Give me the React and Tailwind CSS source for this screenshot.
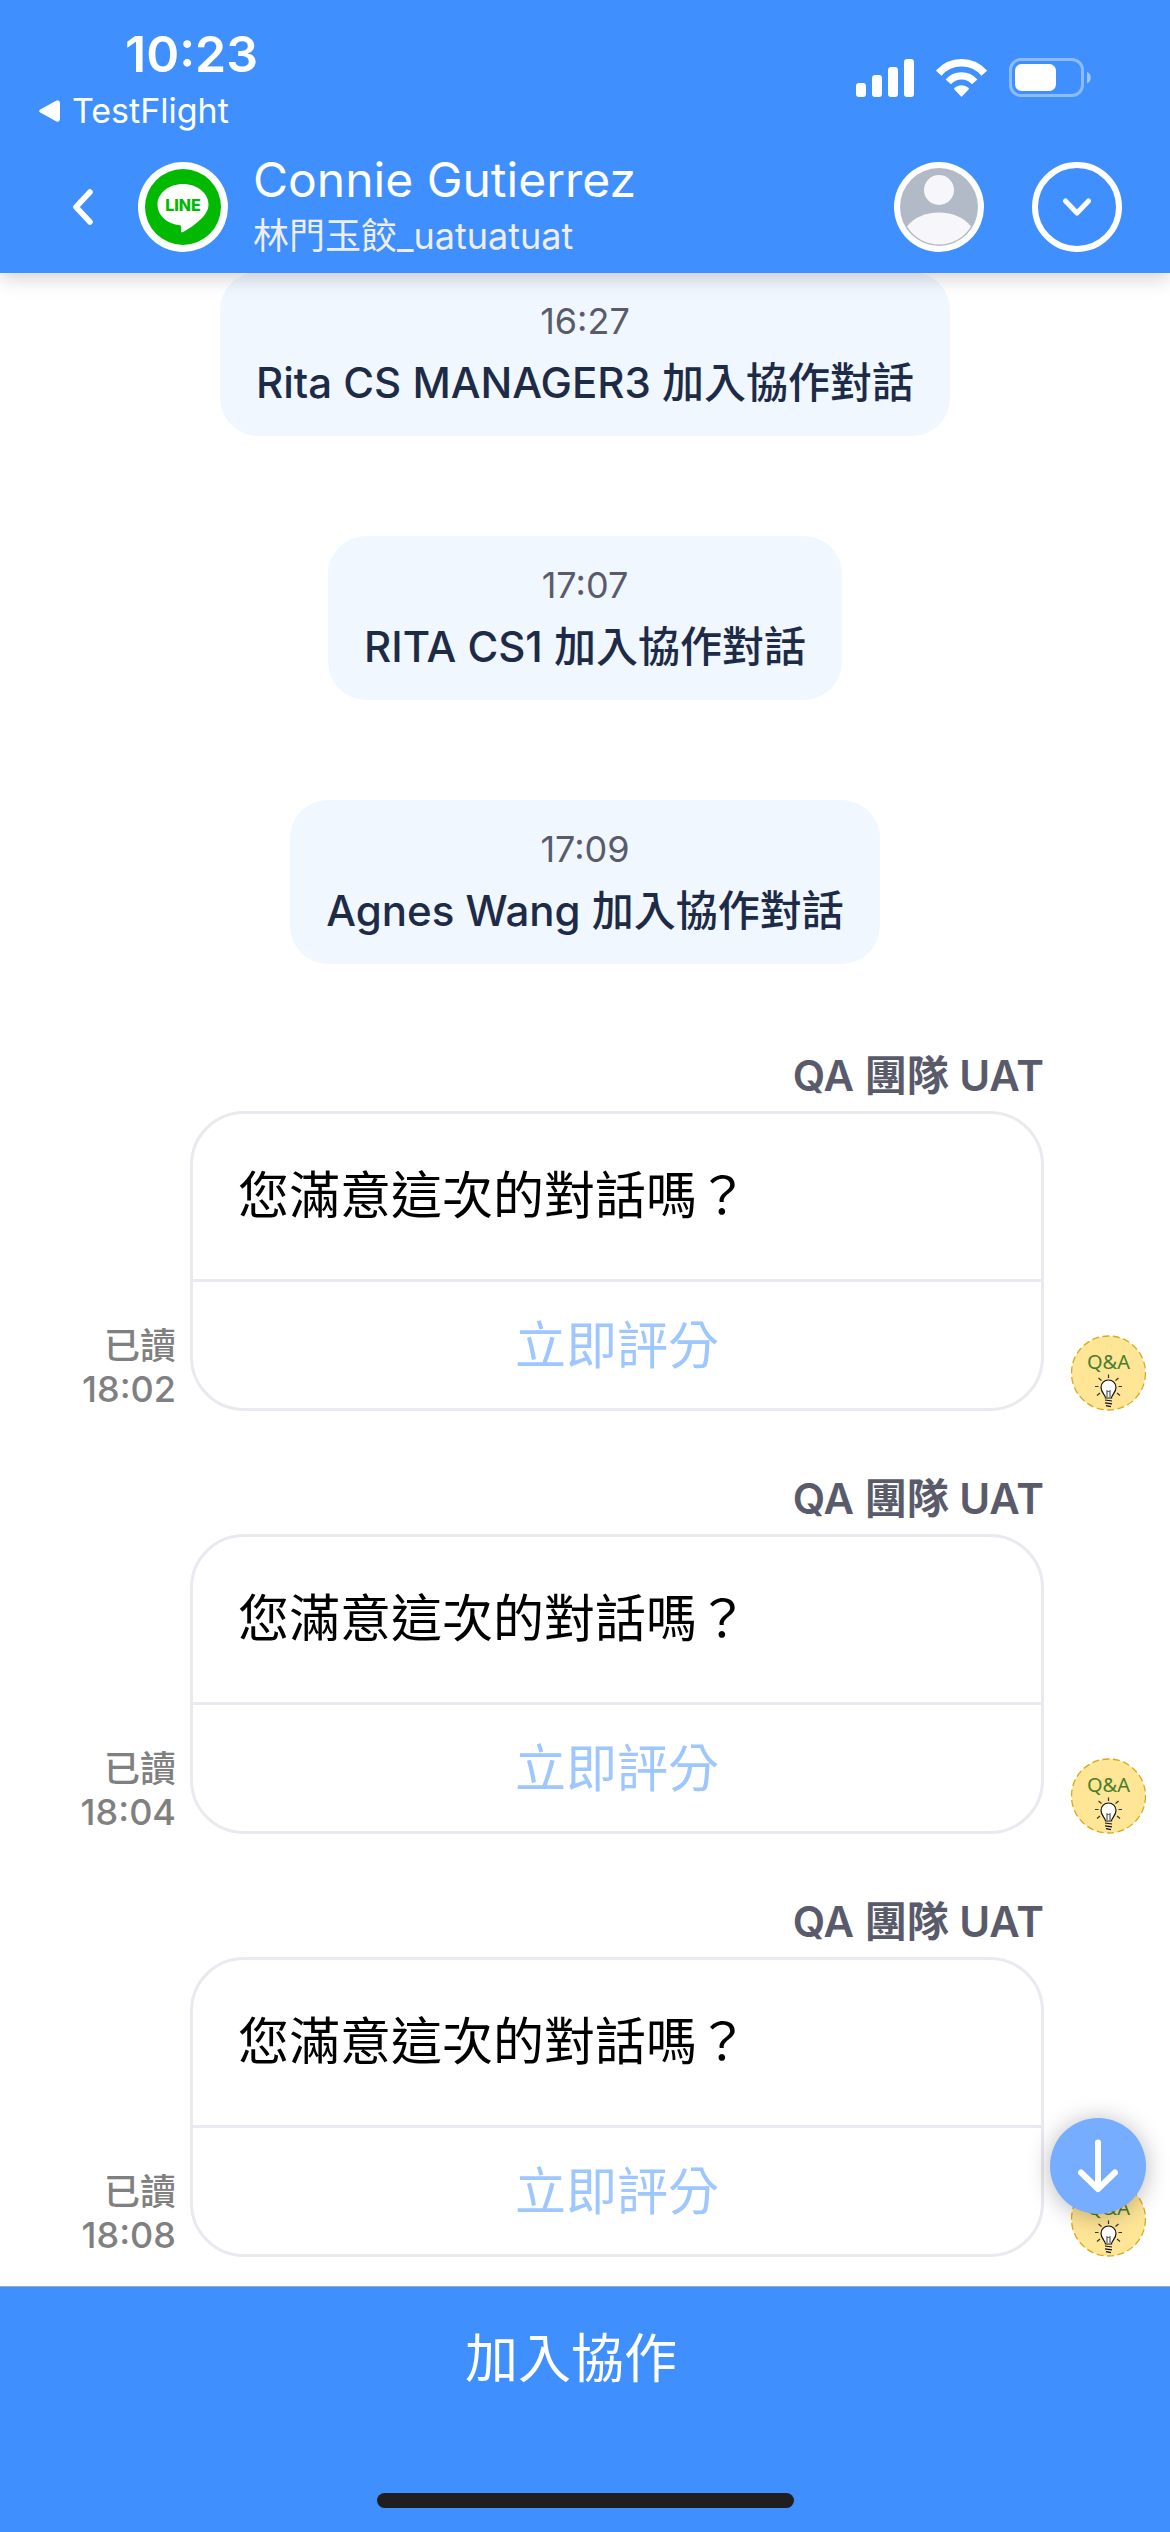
const joins = [
  { time: "16:27", name: "Rita CS MANAGER3" },
  { time: "17:07", name: "RITA CS1" },
  { time: "17:09", name: "Agnes Wang" },
];

const surveys = ["18:02", "18:04", "18:08"];

function SignalIcon() {
  return (
    <svg width="58" height="38" viewBox="0 0 58 38" fill="#fff" aria-hidden="true">
      <rect x="0" y="24" width="10" height="14" rx="3" />
      <rect x="16" y="16" width="10" height="22" rx="3" />
      <rect x="32" y="8" width="10" height="30" rx="3" />
      <rect x="48" y="0" width="10" height="38" rx="3" />
    </svg>
  );
}

function WifiIcon() {
  return (
    <svg width="51" height="38" viewBox="0 0 51 38" fill="none" aria-hidden="true">
      <path d="M2.7 14.2A30.25 30.25 0 0 1 48.3 14.2" stroke="#fff" strokeWidth="7.5" />
      <path d="M12.3 22.8A17.5 17.5 0 0 1 38.7 22.8" stroke="#fff" strokeWidth="7.2" />
      <path d="M18.2 30.2C18 29.7 18.1 29.2 18.6 28.8C22.4 25.4 28.6 25.4 32.4 28.8C32.9 29.2 33 29.7 32.8 30.2L26.2 37.3Q25.5 38 24.8 37.3Z" fill="#fff" />
    </svg>
  );
}

function BatteryIcon() {
  return (
    <svg width="83" height="39" viewBox="0 0 83 39" fill="none" aria-hidden="true">
      <rect x="1.5" y="1.5" width="72" height="36" rx="10.5" stroke="#fff" strokeOpacity=".4" strokeWidth="3" />
      <path d="M78 14C83 15 83 24 78 25.5Z" fill="#fff" fillOpacity=".5" />
      <rect x="6" y="6" width="41" height="27" rx="6.5" fill="#fff" />
    </svg>
  );
}

function LineLogo() {
  return (
    <svg width="90" height="90" viewBox="0 0 90 90" role="img" aria-label="LINE" className="shrink-0">
      <circle cx="45" cy="45" r="45" fill="#fff" />
      <circle cx="45" cy="45" r="38" fill="#00b900" />
      <path d="M45 22C59 22 70.500 31 70.500 42.500C70.500 48 67.500 52.500 63.500 56.500C58 62 50 67.500 45 70C42.800 71 43 69.500 43.200 68.200C43.500 65.500 43.600 63.300 41 63C28.500 61.800 19.500 53 19.500 42.500C19.500 31 31 22 45 22Z" fill="#fff" />
      <text x="45" y="49" textAnchor="middle" fill="#00b900" fontSize="16" fontWeight="800" fontFamily="Inter, sans-serif">LINE</text>
    </svg>
  );
}

function PersonAvatar() {
  return (
    <svg width="90" height="90" viewBox="0 0 90 90" aria-hidden="true">
      <circle cx="45" cy="45" r="45" fill="#fff" />
      <circle cx="45" cy="45" r="39" fill="#b3bac7" />
      <circle cx="45" cy="28" r="15" fill="#f7f7fb" />
      <path d="M13 64.500C20 55.500 31.500 50.500 45 50.500C58.500 50.500 70 55.500 77 64.500A37.500 37.500 0 0 1 13 64.500Z" fill="#f7f7fb" />
    </svg>
  );
}

function QaBadge() {
  return (
    <svg width="75" height="76" viewBox="0 0 75 76" role="img" aria-label="Q&A" className="shrink-0">
      <circle cx="37.500" cy="38" r="37" fill="#ffe596" stroke="#d9a91c" strokeWidth="1.300" strokeDasharray="7 3.500" />
      <text x="37.500" y="34" textAnchor="middle" fill="#4a7d2c" fontSize="20" fontFamily="'Noto Sans', sans-serif">Q&amp;A</text>
      <g stroke="#333" strokeWidth="1.200" fill="none">
        <path d="M37.500 39.500v3.500M27.500 43l3 2.500M47.500 43l-3 2.500M24 51.500h3.500M47.500 51.500h3.500M26 60.500l3-2.500M49 60.500l-3-2.500" />
        <path d="M34.500 63C34.500 60 30 57.500 30 52.500A7.500 7.500 0 0 1 45 52.500C45 57.500 40.500 60 40.500 63Z" fill="#fff" stroke="#111" />
        <path d="M36 62v-6.500l1.500 1.500l1.500-1.500V62" stroke="#333" strokeWidth="1" />
        <path d="M34 65l7 1M34 67.800l7 1M35 70.600l5 1" stroke="#111" strokeWidth="1.200" />
      </g>
    </svg>
  );
}

function JoinNotice({ time, name }) {
  return (
    <div className="rounded-[38px] bg-[#f0f7ff] px-9 pt-[25px] pb-[25px] text-center">
      <time className="block text-[36px] leading-[48px] text-[#595b6b]">{time}</time>
      <p className="mt-[10px] text-[42px] leading-[56px] font-medium text-[#1d2b47]">{name} 加入協作對話</p>
    </div>
  );
}

function SurveyMessage({ time }) {
  return (
    <article className="mb-[60px] last:mb-0">
      <h2 className="mr-[126px] mb-[7px] text-right text-[42px] leading-[56px] font-semibold text-[#595b6b]">QA 團隊 UAT</h2>
      <div className="flex items-end pr-6">
        <div className="mr-3.5 w-44 shrink-0 text-right text-[36px] leading-[43px] font-medium text-[#808080]">
          <p>已讀</p>
          <time className="block">{time}</time>
        </div>
        <div className="mr-[27px] min-w-0 flex-1 overflow-hidden rounded-[54px] border-[3px] border-[#e9e9f0]">
          <p className="px-[45px] pt-[50px] pb-[51px] text-[51px] leading-[64px] text-black">您滿意這次的對話嗎？</p>
          <button type="button" className="block w-full border-t-[3px] border-[#e9e9f0] pt-8 pb-[30px] text-[51px] leading-[64px] text-[#9ec6ff]">
            立即評分
          </button>
        </div>
        <QaBadge />
      </div>
    </article>
  );
}

export default function App() {
  return (
    <div className="flex min-h-screen flex-col bg-white font-['Inter','Noto_Sans_CJK_TC',sans-serif]">
      <header className="relative z-10 bg-[#3f8fff] pb-[3px] text-white shadow-[0_4px_20px_rgba(0,0,0,0.2)]">
        <div className="flex items-start justify-between pt-8 pr-[78px]">
          <div>
            <time className="block pl-[125px] text-[50px] leading-[44px] font-semibold">10:23</time>
            <a href="#testflight" className="mt-[15px] ml-[39px] flex items-center gap-3 text-[34px] leading-10">
              <svg width="21" height="22" viewBox="0 0 21 22" fill="#fff" aria-hidden="true">
                <path d="M1.200 9.400L17.500 .6Q20.500-.4 21 3V19Q20.500 22.400 17.500 21.400L1.200 12.600Q-.8 11 1.200 9.400Z" />
              </svg>
              TestFlight
            </a>
          </div>
          <div className="mt-[26px] flex items-center gap-[22px]">
            <SignalIcon />
            <WifiIcon />
            <BatteryIcon />
          </div>
        </div>
        <div className="mt-[13px] flex h-[126px] items-center pr-12">
          <button type="button" aria-label="返回" className="ml-[73px] shrink-0">
            <svg width="20" height="36" viewBox="0 0 20 36" fill="none" stroke="#fff" strokeWidth="5.500" strokeLinecap="round" strokeLinejoin="round" aria-hidden="true">
              <path d="M17 3L3 18L17 33" />
            </svg>
          </button>
          <div className="ml-[45px] flex min-w-0 flex-1 items-center gap-[25px]">
            <LineLogo />
            <div className="min-w-0 pb-0.5">
              <h1 className="truncate text-[48px] leading-[60px]">Connie Gutierrez</h1>
              <p className="truncate text-[36px] leading-[52px] text-[#eeeeee]">林門玉餃_uatuatuat</p>
            </div>
          </div>
          <button type="button" aria-label="個人資料" className="shrink-0 rounded-full">
            <PersonAvatar />
          </button>
          <button type="button" aria-label="展開" className="ml-12 flex size-[90px] shrink-0 items-center justify-center rounded-full border-[6px] border-white">
            <svg width="30" height="20" viewBox="0 0 30 20" fill="none" stroke="#fff" strokeWidth="5" strokeLinecap="round" strokeLinejoin="round" aria-hidden="true">
              <path d="M3.500 4L15 16L26.500 4" />
            </svg>
          </button>
        </div>
      </header>

      <main className="relative -mt-px flex-1 pb-7">
        <div className="flex flex-col items-center gap-[100px]">
          {joins.map((item) => (
            <JoinNotice key={item.time} {...item} />
          ))}
        </div>
        <div className="mt-[84px]">
          {surveys.map((time) => (
            <SurveyMessage key={time} time={time} />
          ))}
        </div>
        <button type="button" aria-label="捲動到底部" className="absolute right-6 bottom-[72px] flex size-24 items-center justify-center rounded-full bg-[#76adff] shadow-[0_2px_24px_rgba(0,0,0,0.28)]">
          <svg width="40" height="54" viewBox="0 0 40 54" fill="none" stroke="#fff" strokeWidth="6" strokeLinecap="round" strokeLinejoin="round" aria-hidden="true">
            <path d="M20 3.500V50M3 33.500L20 50L37 33.500" />
          </svg>
        </button>
      </main>

      <footer className="border-t border-[#a4a8b0] bg-[#3f8fff] pb-6">
        <button type="button" className="block w-full pt-9 pr-7 text-[53px] leading-[72px] text-white">
          加入協作
        </button>
        <div className="mx-auto mt-[98px] h-[15px] w-[417px] rounded-full bg-[#1f1f1f]" />
      </footer>
    </div>
  );
}
